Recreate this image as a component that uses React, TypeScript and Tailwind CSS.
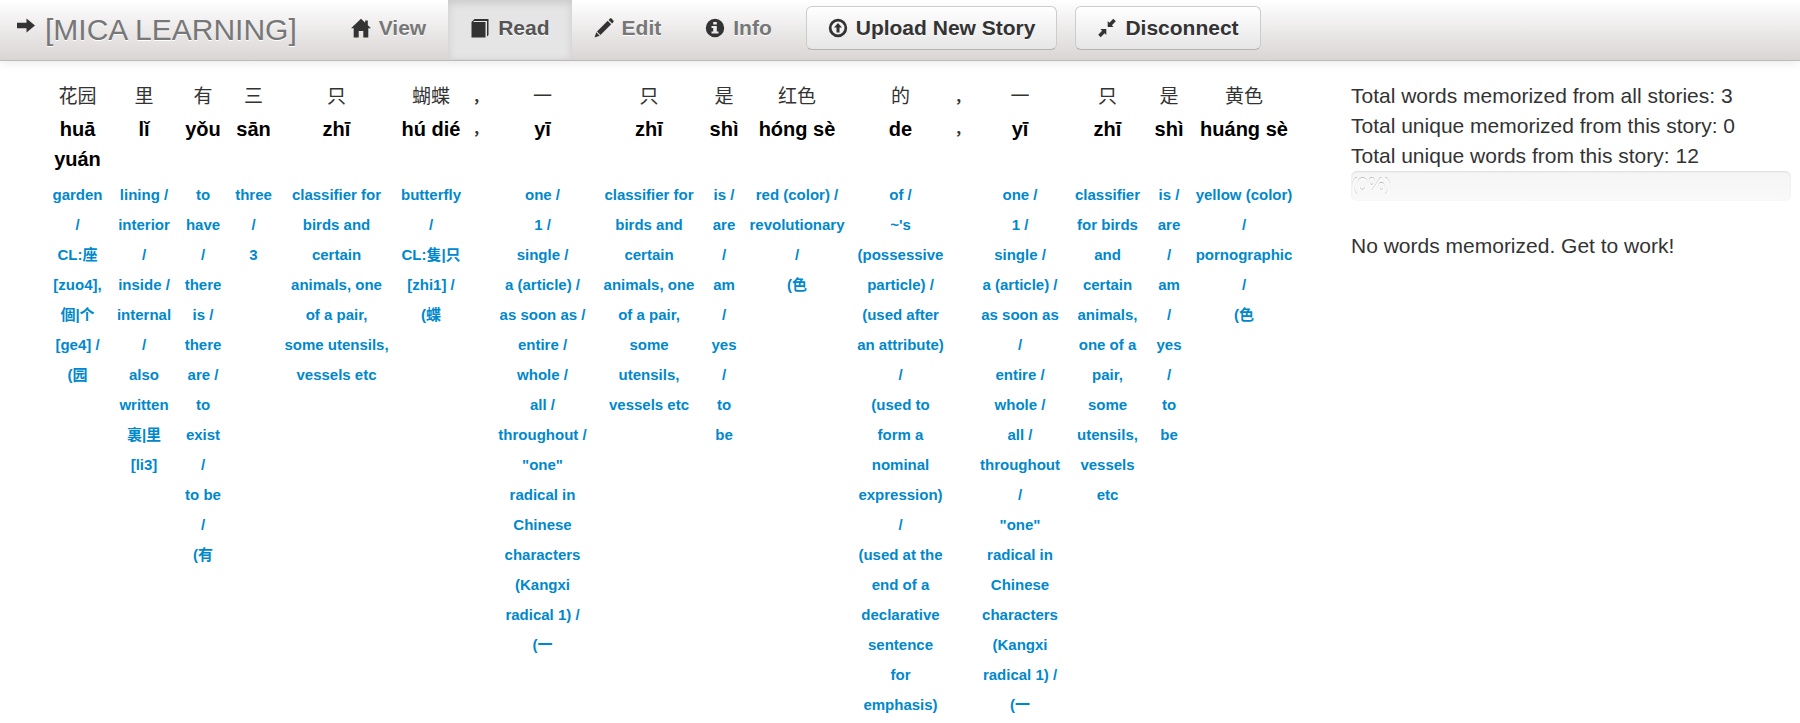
import type { ReactNode } from "react";

type Word = { hanzi: string; pinyin: string; width: string; gloss: string[] };

const one = ["one /", "1 /", "single /", "a (article) /"];
const oneTail = ['"one"', "radical in", "Chinese", "characters", "(Kangxi", "radical 1) /", "(一"];
const be = ["is /", "are", "/", "am", "/", "yes", "/", "to", "be"];

const words: Word[] = [
  { hanzi: "花园", pinyin: "huā yuán", width: "w-[65px]", gloss: ["garden", "/", "CL:座", "[zuo4],", "個|个", "[ge4] /", "(园"] },
  { hanzi: "里", pinyin: "lǐ", width: "w-[68px]", gloss: ["lining /", "interior", "/", "inside /", "internal", "/", "also", "written", "裏|里", "[li3]"] },
  { hanzi: "有", pinyin: "yǒu", width: "w-[50px]", gloss: ["to", "have", "/", "there", "is /", "there", "are /", "to", "exist", "/", "to be", "/", "(有"] },
  { hanzi: "三", pinyin: "sān", width: "w-[51px]", gloss: ["three", "/", "3"] },
  { hanzi: "只", pinyin: "zhī", width: "w-[115px]", gloss: ["classifier for", "birds and", "certain", "animals, one", "of a pair,", "some utensils,", "vessels etc"] },
  { hanzi: "蝴蝶", pinyin: "hú dié", width: "w-[74px]", gloss: ["butterfly", "/", "CL:隻|只", "[zhi1] /", "(蝶"] },
  { hanzi: "，", pinyin: "，", width: "w-[24px]", gloss: [] },
  { hanzi: "一", pinyin: "yī", width: "w-[101px]", gloss: [...one, "as soon as /", "entire /", "whole /", "all /", "throughout /", ...oneTail] },
  { hanzi: "只", pinyin: "zhī", width: "w-[112px]", gloss: ["classifier for", "birds and", "certain", "animals, one", "of a pair,", "some", "utensils,", "vessels etc"] },
  { hanzi: "是", pinyin: "shì", width: "w-[38px]", gloss: be },
  { hanzi: "红色", pinyin: "hóng sè", width: "w-[108px]", gloss: ["red (color) /", "revolutionary", "/", "(色"] },
  { hanzi: "的", pinyin: "de", width: "w-[99px]", gloss: ["of /", "~'s", "(possessive", "particle) /", "(used after", "an attribute)", "/", "(used to", "form a", "nominal", "expression)", "/", "(used at the", "end of a", "declarative", "sentence", "for", "emphasis)"] },
  { hanzi: "，", pinyin: "，", width: "w-[24px]", gloss: [] },
  { hanzi: "一", pinyin: "yī", width: "w-[92px]", gloss: [...one, "as soon as", "/", "entire /", "whole /", "all /", "throughout", "/", ...oneTail] },
  { hanzi: "只", pinyin: "zhī", width: "w-[83px]", gloss: ["classifier", "for birds", "and", "certain", "animals,", "one of a", "pair,", "some", "utensils,", "vessels", "etc"] },
  { hanzi: "是", pinyin: "shì", width: "w-[40px]", gloss: be },
  { hanzi: "黄色", pinyin: "huáng sè", width: "w-[110px]", gloss: ["yellow (color)", "/", "pornographic", "/", "(色"] },
];

const isPunctuation = (w: Word) => w.gloss.length === 0;

function Icon({ children }: { children: ReactNode }) {
  return (
    <svg aria-hidden="true" viewBox="0 0 20 20" className="size-5 shrink-0 fill-[#333]">
      {children}
    </svg>
  );
}

const ArrowIcon = () => (
  <Icon><path d="M1 7.700h9.500V3.500l8.500 7-8.500 7v-4.200H1z" /></Icon>
);
const HomeIcon = () => (
  <Icon><path d="M10 .8 0 10.300h2.700V19.500h5V13h4.600v6.500h5v-9.200H20L16.800 7.200V2.500h-2.600v2.200z" /></Icon>
);
const BookIcon = () => (
  <Icon><path d="M4.500 1H18.500V17l-1.500 1.500V3H4.200L3 4h12.500v15.500H1.500V4z" /></Icon>
);
const PencilIcon = () => (
  <Icon><path d="m14.600 1.900 3.500 3.500 1.100-1.100c.6-.7.6-1.400 0-2L17.700.8c-.6-.6-1.400-.6-2 0zM13.700 2.800 3 13.500l3.500 3.500L17.200 6.300zM2.300 14.300.5 19.500l5.200-1.800z" /></Icon>
);
const InfoIcon = () => (
  <Icon><path fillRule="evenodd" d="M10 .8a9.200 9.200 0 1 0 0 18.400A9.200 9.200 0 0 0 10 .8zM8.200 4h3.600v2.600H8.200zM6.500 8h5.300v5.500h1.700v2h-7v-2h1.700V10H6.500z" /></Icon>
);
const UploadIcon = () => (
  <Icon><path fillRule="evenodd" d="M10 .8a9.200 9.200 0 1 0 0 18.400A9.200 9.200 0 0 0 10 .8zm0 2.700a6.500 6.500 0 1 1 0 13 6.500 6.500 0 0 1 0-13z" /><path d="m10 5 4 4.500h-2.500V14.500h-3V9.500H6z" /></Icon>
);
const ShrinkIcon = () => (
  <Icon><path d="m10.700 3 1.700 1.700L16.300.8l2.500 2.500-3.900 3.900 1.700 1.800h-5.900zM9.300 17l-1.700-1.700-3.900 3.900-2.500-2.500 3.900-3.900L3.400 11h5.900z" /></Icon>
);

function NavLink({ icon, label, active }: { icon: ReactNode; label: string; active?: boolean }) {
  return (
    <a
      href="#"
      aria-current={active ? "page" : undefined}
      className={
        active
          ? "flex h-[59px] items-center gap-2 bg-[#e5e5e5] px-[22px] pb-1 text-[#555] shadow-[inset_0_3px_8px_rgba(0,0,0,0.125)]"
          : "flex h-[59px] items-center gap-2 px-[22px] pb-1 text-[#777]"
      }
    >
      {icon}
      {label}
    </a>
  );
}

function NavButton({ icon, label }: { icon: ReactNode; label: string }) {
  return (
    <button
      type="button"
      className="flex h-11 items-center gap-2 rounded-md border border-[#ccc] border-b-[#b3b3b3] bg-linear-to-b from-white to-[#e6e6e6] px-[21px] text-[#333] [text-shadow:0_1px_1px_rgba(255,255,255,0.75)]"
    >
      {icon}
      {label}
    </button>
  );
}

export default function App() {
  return (
    <div className="min-h-screen bg-white font-['Liberation_Sans','Noto_Sans_CJK_SC',sans-serif] text-[21px] leading-[30px] text-[#333]">
      <header className="flex h-[61px] items-start border-b border-[#bbb] bg-linear-to-b from-white to-[#d9d5d4] shadow-[0_1px_10px_rgba(0,0,0,0.1)]">
        <a href="#" className="flex items-start gap-[9px] pl-4 pr-8 pt-[15px] text-[#777] [text-shadow:0_1px_0_#fff]">
          <ArrowIcon />
          <span className="text-[30px]">[MICA LEARNING]</span>
        </a>
        <nav className="flex font-bold [text-shadow:0_1px_0_#fff]">
          <NavLink icon={<HomeIcon />} label="View" />
          <NavLink icon={<BookIcon />} label="Read" active />
          <NavLink icon={<PencilIcon />} label="Edit" />
          <NavLink icon={<InfoIcon />} label="Info" />
        </nav>
        <div className="flex gap-[18px] pl-3 pt-[6px] font-bold">
          <NavButton icon={<UploadIcon />} label="Upload New Story" />
          <NavButton icon={<ShrinkIcon />} label="Disconnect" />
        </div>
      </header>
      <main className="flex pt-5">
        <section className="w-3/4 shrink-0 pl-[45px] pt-px">
          <table className="table-fixed border-collapse text-center">
            <thead>
              <tr>
                {words.map((w, i) => (
                  <th
                    key={i}
                    scope="col"
                    className={`${w.width} h-8 p-0 align-top whitespace-nowrap ${isPunctuation(w) ? "text-[15px] font-bold" : "text-[19px] font-normal"}`}
                  >
                    {w.hanzi}
                  </th>
                ))}
              </tr>
            </thead>
            <tbody>
              <tr>
                {words.map((w, i) => (
                  <td
                    key={i}
                    className={`h-[66px] p-0 align-top font-bold ${isPunctuation(w) ? "text-[15px]" : "text-[20px] text-black"}`}
                  >
                    {w.pinyin}
                  </td>
                ))}
              </tr>
              <tr>
                {words.map((w, i) => (
                  <td key={i} className="p-0 align-top text-[15px] font-bold">
                    {!isPunctuation(w) && (
                      <a href="#" className="block whitespace-pre text-[#08c]">{w.gloss.join("\n")}</a>
                    )}
                  </td>
                ))}
              </tr>
            </tbody>
          </table>
        </section>
        <aside className="flex-1 pl-px pr-[9px]">
          <p>Total words memorized from all stories: 3</p>
          <p>Total unique memorized from this story: 0</p>
          <p>Total unique words from this story: 12</p>
          <div
            role="progressbar"
            aria-label="Words memorized"
            aria-valuenow={0}
            className="h-[30px] overflow-hidden rounded-md bg-linear-to-b from-[#f5f5f5] to-[#f9f9f9] text-[19px] leading-7 text-white shadow-[inset_0_1px_2px_rgba(0,0,0,0.1)] [text-shadow:0_-1px_0_rgba(0,0,0,0.25)]"
          >
            (0%)
          </div>
          <p className="pt-[30px]">No words memorized. Get to work!</p>
        </aside>
      </main>
    </div>
  );
}
